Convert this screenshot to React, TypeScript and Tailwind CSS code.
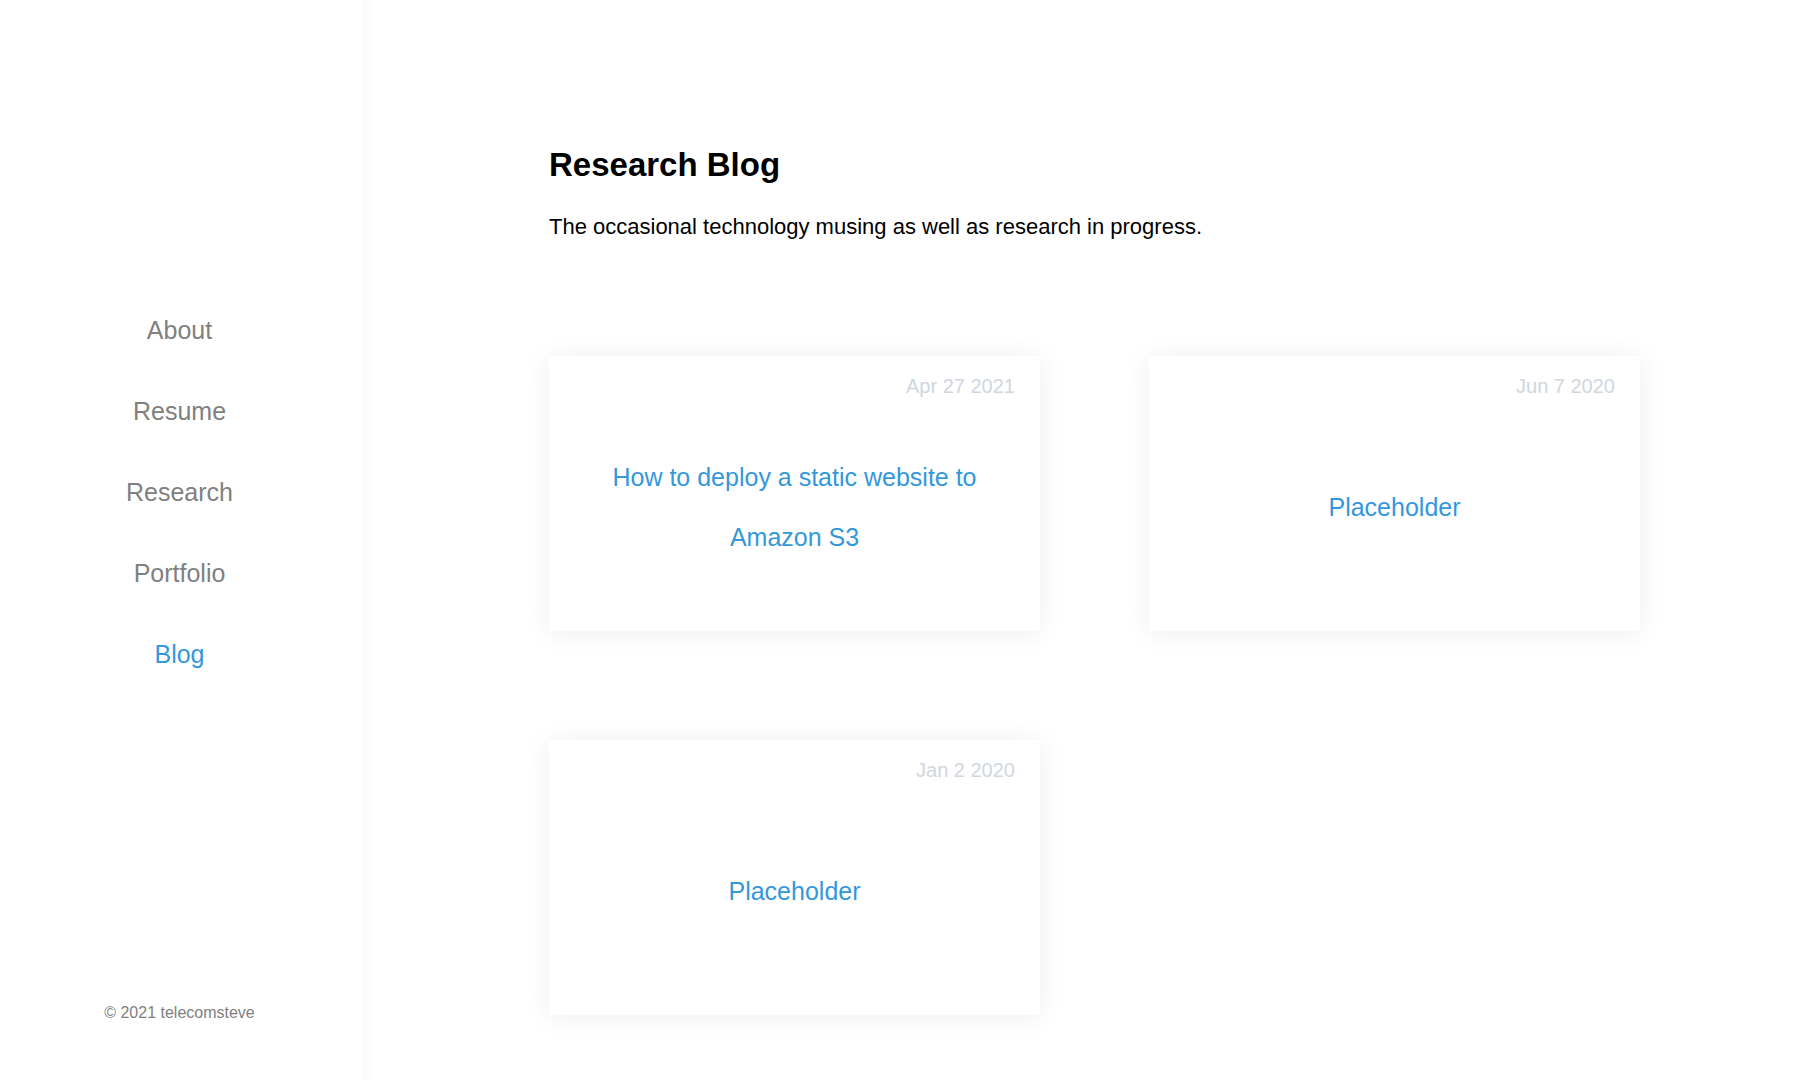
const navItems = ["About", "Resume", "Research", "Portfolio", "Blog"];

const posts = [
  { date: "Apr 27 2021", title: "How to deploy a static website to Amazon S3" },
  { date: "Jun 7 2020", title: "Placeholder" },
  { date: "Jan 2 2020", title: "Placeholder" },
];

function Sidebar() {
  return (
    <aside className="relative z-10 flex h-screen w-[363px] shrink-0 flex-col items-center bg-white pr-[4px] shadow-[2px_0_12px_rgba(0,0,0,0.04)]">
      <nav className="mt-[290px] flex flex-col items-center">
        {navItems.map((item) => (
          <a
            key={item}
            href="#"
            className={`flex h-[81px] items-center text-[25px] ${
              item === "Blog" ? "text-[#3498db]" : "text-[#808080]"
            }`}
          >
            {item}
          </a>
        ))}
      </nav>
      <div className="mt-auto mb-[57px] text-[16px] leading-5 text-[#808080]">
        © 2021 telecomsteve
      </div>
    </aside>
  );
}

function PostCard({ date, title }: { date: string; title: string }) {
  return (
    <div className="flex h-[275px] w-[491px] flex-col bg-white px-4 pt-4 pb-[18px] shadow-[0_2px_24px_rgba(0,0,0,0.07)]">
      <div className="pr-[9px] text-right text-[20px] leading-[28px] text-[#cfd6de]">{date}</div>
      <div className="flex flex-1 items-center justify-center px-10 text-center">
        <a href="#" className="text-[25px] leading-[60px] text-[#3498db]">
          {title}
        </a>
      </div>
    </div>
  );
}

export default function App() {
  return (
    <div
      className="flex h-screen w-full overflow-hidden bg-white"
      style={{ fontFamily: '"Liberation Sans", Arial, sans-serif' }}
    >
      <Sidebar />
      <main className="flex-1 pl-[186px] pt-[146px]">
        <h1 className="text-[33px] font-bold leading-[37px] text-black">Research Blog</h1>
        <p className="mt-[31px] text-[22px] leading-[25px] text-black">
          The occasional technology musing as well as research in progress.
        </p>
        <div className="mt-[117px] grid grid-cols-[491px_491px] gap-x-[109px] gap-y-[109px]">
          {posts.map((p, i) => (
            <PostCard key={i} date={p.date} title={p.title} />
          ))}
        </div>
      </main>
    </div>
  );
}
